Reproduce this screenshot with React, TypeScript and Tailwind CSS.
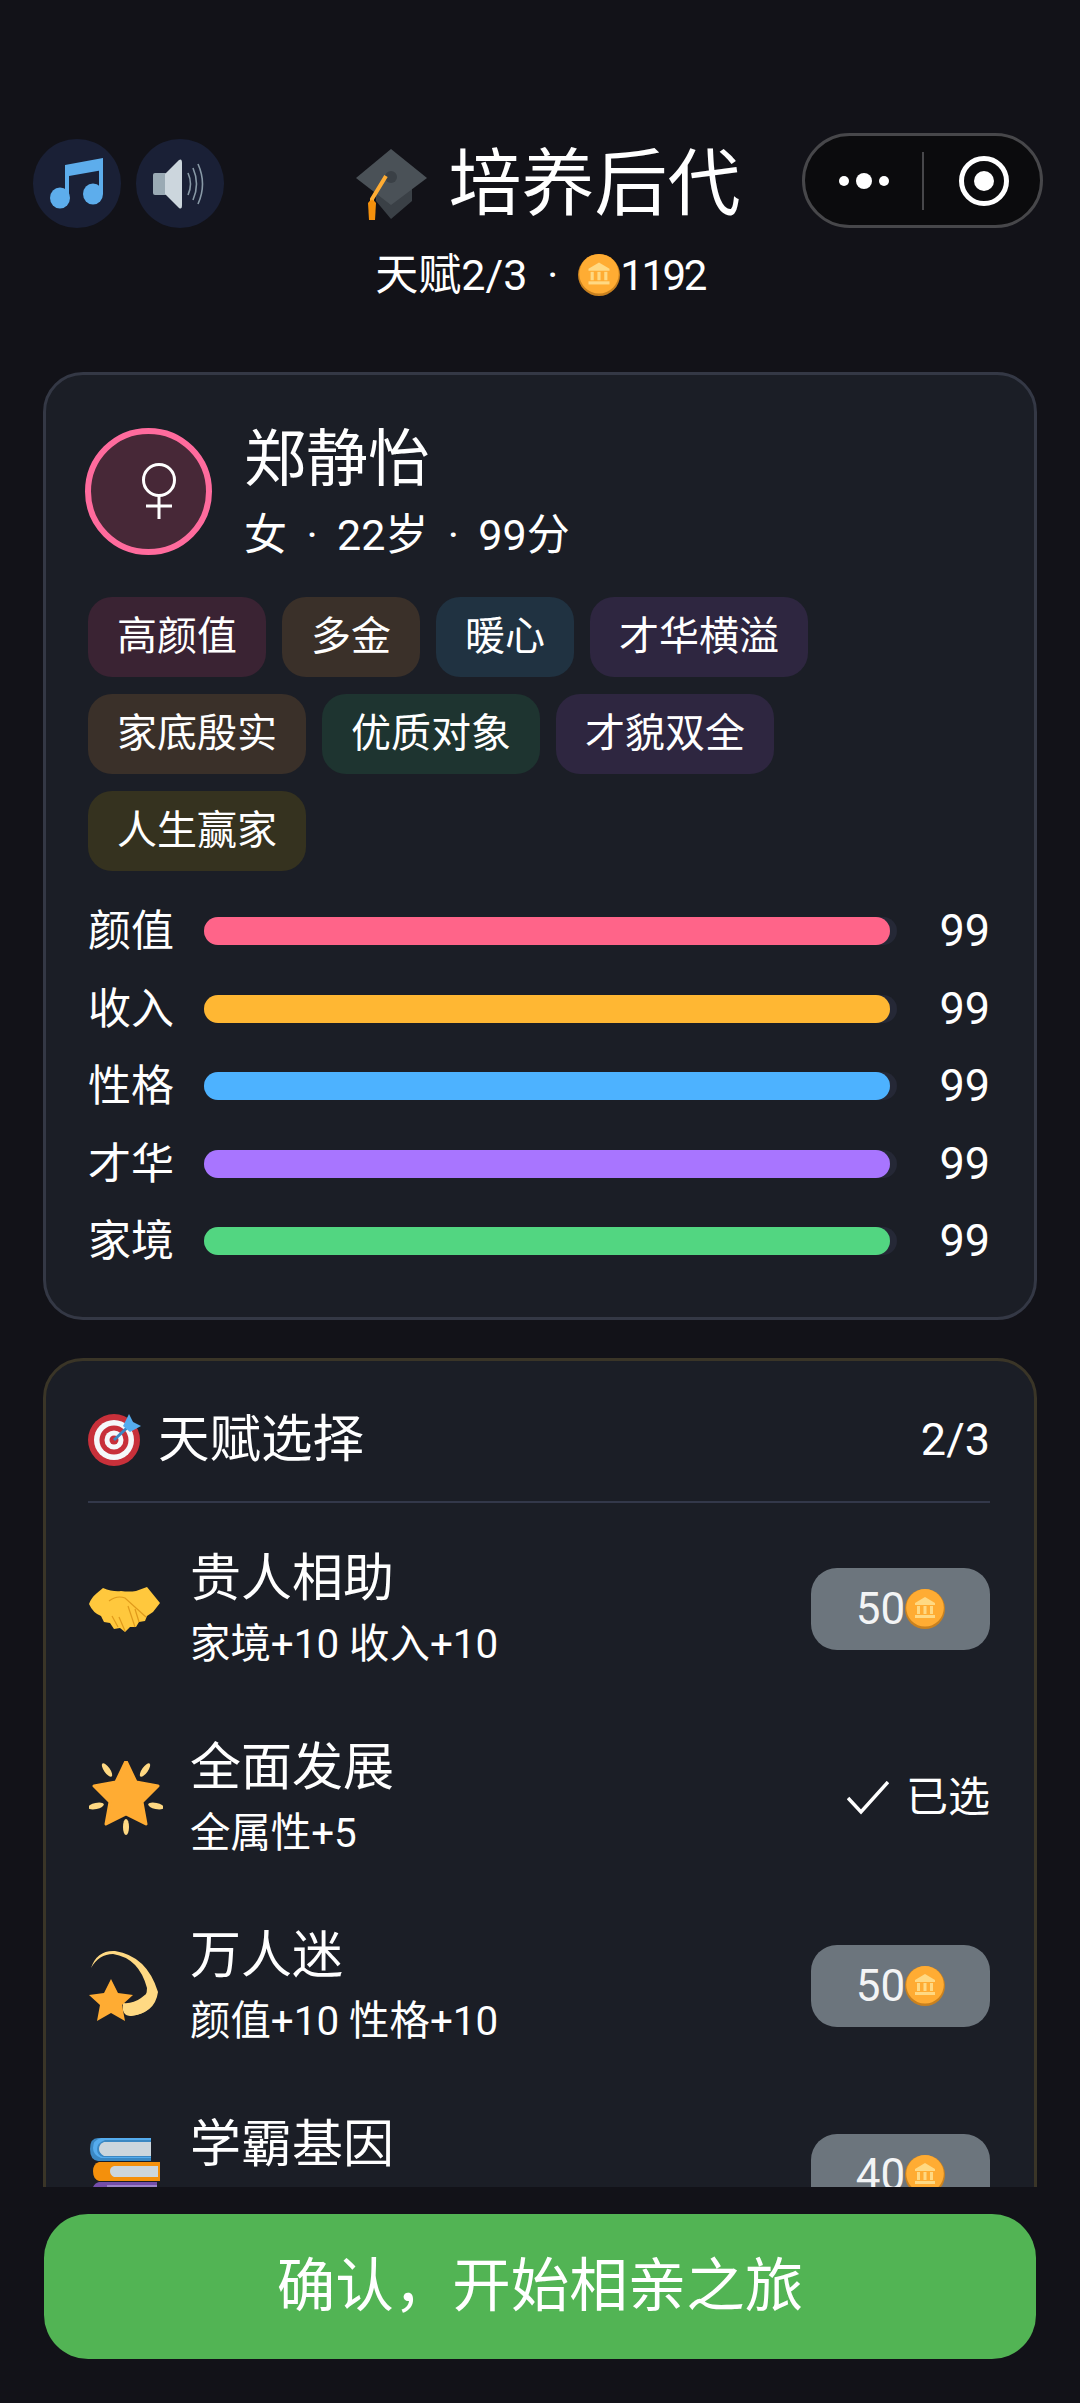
import React from 'react';

const Coin = ({ size = 40 }: { size?: number }) => (
  <svg width={size} height={size} viewBox="0 0 40 40" className="shrink-0">
    <circle cx="20" cy="20" r="20" fill="#C9811F" />
    <circle cx="20" cy="18.8" r="18.8" fill="#FFAC33" />
    <g fill="#FFD983">
      <path d="M20 8 L30 14 V16 H10 V14 Z" />
      <rect x="12" y="17" width="3" height="8" />
      <rect x="18.5" y="17" width="3" height="8" />
      <rect x="25" y="17" width="3" height="8" />
      <rect x="10" y="26" width="20" height="3" />
    </g>
  </svg>
);

const MusicIcon = () => (
  <svg width="54" height="51" viewBox="0 0 54 51">
    <g fill="#5DADEC">
      <path d="M15 7 L53 0 V12 L19 18 V40 H15 Z" />
      <path d="M49 2 H53 V36 H49 Z" />
      <ellipse cx="10" cy="40" rx="10" ry="10.5" />
      <ellipse cx="43" cy="36" rx="10" ry="10.5" />
    </g>
  </svg>
);

const SpeakerIcon = () => (
  <svg width="54" height="50" viewBox="0 0 54 50">
    <rect x="0" y="14" width="14" height="22" rx="2" fill="#9AAAB4" />
    <path d="M12 15 L26 1 Q29 -1 29 4 V46 Q29 51 26 49 L12 35 Z" fill="#CCD6DD" />
    <g fill="none" stroke="#8899A6" strokeWidth="1.6">
      <path d="M35 14 Q40 25 35 36" />
      <path d="M40 9 Q47 25 40 41" />
      <path d="M45 5 Q54 25 45 45" />
    </g>
  </svg>
);

const CapIcon = () => (
  <svg width="72" height="72" viewBox="0 0 72 72">
    <path d="M20 34 L36 26 L56 34 V52 L35 70 L20 52 Z" fill="#3A4046" />
    <path d="M35 0 L71 29 L35 56 L0 29 Z" fill="#4A5157" />
    <circle cx="35" cy="28" r="6" fill="#3A4046" />
    <path d="M30 27 L16 50 V60" fill="none" stroke="#FFAC33" strokeWidth="4" />
    <path d="M12 54 Q16 48 20 54 L19 71 H13 Z" fill="#F4900C" />
  </svg>
);

const DartIcon = () => (
  <svg width="54" height="52" viewBox="0 0 54 52">
    <circle cx="26" cy="26" r="26" fill="#C8303A" />
    <circle cx="26" cy="26" r="20" fill="#F5F8FA" />
    <circle cx="26" cy="26" r="14.5" fill="#C8303A" />
    <circle cx="26" cy="26" r="9.5" fill="#F5F8FA" />
    <circle cx="26" cy="26" r="4.5" fill="#C8303A" />
    <path d="M26 26 L42 11" stroke="#3B88C3" strokeWidth="3" />
    <path d="M35 12 L41 0 L45 8 L53 12 L42 18 Z" fill="#55ACEE" />
  </svg>
);

const HandshakeIcon = () => (
  <svg width="71" height="47" viewBox="0 0 71 47">
    <path
      d="M0 18 Q2 12 8 7 L14 2 Q24 6 32 5 Q40 6 47 5 L58 1 L71 17 L64 26 L58 30 L56 35 L50 36 L47 41 L41 41 L36 46 L31 42 L25 43 L21 37 L15 36 L12 30 Q4 27 0 18 Z"
      fill="#FFC83D"
    />
    <g fill="none" stroke="#E09A1B" strokeWidth="1.2">
      <path d="M20 15 Q28 9 36 12 L57 31" />
      <path d="M46 23 L50 36" />
      <path d="M39 20 L46 41" />
      <path d="M30 31 L36 45" />
      <path d="M23 30 L29 41" />
    </g>
  </svg>
);

const STAR = 'M37 0 L47 21 L69 25 L53 41 L57 63 L37 53 L17 63 L21 41 L5 25 L27 21 Z';

const GlowingStarIcon = () => (
  <svg width="74" height="74" viewBox="0 0 74 74">
    <path d={STAR} fill="#FFAC33" strokeLinejoin="round" stroke="#FFAC33" strokeWidth="3" />
    <g fill="#FFD983">
      <ellipse cx="18" cy="9" rx="3" ry="8" transform="rotate(-35 18 9)" />
      <ellipse cx="56" cy="9" rx="3" ry="8" transform="rotate(35 56 9)" />
      <ellipse cx="7" cy="45" rx="8" ry="3" transform="rotate(-12 7 45)" />
      <ellipse cx="67" cy="45" rx="8" ry="3" transform="rotate(12 67 45)" />
      <ellipse cx="37" cy="66" rx="3" ry="8" />
    </g>
  </svg>
);

const DizzyIcon = () => (
  <svg width="70" height="72" viewBox="0 0 70 72">
    <path d="M2 18 Q8 0 26 1 Q58 6 69 42 Q66 64 40 66 Q58 52 58 38 Q50 8 24 4 Q10 4 2 18 Z" fill="#FFD983" />
    <path d="M34 53 Q44 54 52 48 Q58 44 62 38 Q70 62 42 66 Q32 66 34 53 Z" fill="#FFD983" />
    <path
      d="M22 29 L29 43 L44 45 L33 55 L36 71 L22 63 L8 71 L11 55 L0 45 L15 43 Z"
      fill="#FFAC33"
      strokeLinejoin="round"
    />
  </svg>
);

const BooksIcon = () => (
  <svg width="71" height="75" viewBox="0 0 71 75">
    <path d="M9 1 H62 V24 H9 Q1 23 1 12 Q1 1 9 1 Z" fill="#3B88C3" />
    <path d="M12 1 H62 V3 H16 Q8 6 8 12 Q8 18 14 20 H62 V21 H12 Q4 18 4 11 Q4 3 12 1 Z" fill="#55ACEE" />
    <path d="M15 5 H62 V19 H15 Q10 16 10 12 Q10 7 15 5 Z" fill="#CCD6DD" />
    <path d="M10 25 H71 V44 H10 Q4 42 4 34 Q4 27 10 25 Z" fill="#F4900C" />
    <path d="M25 29 H69 V40 H25 Q21 38 21 34 Q21 30 25 29 Z" fill="#CCD6DD" />
    <path d="M10 45 H68 V68 H10 Q3 66 3 56 Q3 47 10 45 Z" fill="#744EAA" />
    <path d="M18 48 H68 V64 H18 Z" fill="#9B84C9" />
  </svg>
);

const tags = [
  { text: '高颜值', bg: 'bg-[#3a2333]' },
  { text: '多金', bg: 'bg-[#3a3029]' },
  { text: '暖心', bg: 'bg-[#203241]' },
  { text: '才华横溢', bg: 'bg-[#2e2640]' },
  { text: '家底殷实', bg: 'bg-[#3a3029]' },
  { text: '优质对象', bg: 'bg-[#1e3430]' },
  { text: '才貌双全', bg: 'bg-[#2e2640]' },
  { text: '人生赢家', bg: 'bg-[#35321f]' },
];

const stats = [
  { label: '颜值', color: 'bg-[#ff6489]' },
  { label: '收入', color: 'bg-[#ffb733]' },
  { label: '性格', color: 'bg-[#4db2ff]' },
  { label: '才华', color: 'bg-[#a875ff]' },
  { label: '家境', color: 'bg-[#52d681]' },
];

const talents = [
  { name: '贵人相助', desc: '家境+10 收入+10', cost: 50, icon: <HandshakeIcon /> },
  { name: '全面发展', desc: '全属性+5', selected: true, icon: <GlowingStarIcon /> },
  { name: '万人迷', desc: '颜值+10 性格+10', cost: 50, icon: <DizzyIcon /> },
  { name: '学霸基因', desc: '', cost: 40, icon: <BooksIcon /> },
];

export default function App() {
  return (
    <div className="flex h-[2403px] w-[1080px] flex-col overflow-hidden bg-[#121218] font-['Roboto','Noto_Sans_CJK_SC',sans-serif] text-white">
      <header className="shrink-0 pt-[133px]">
        <div className="grid grid-cols-[1fr_auto_1fr] items-start pl-[33px] pr-[37px]">
          <div className="mt-[6px] flex gap-[15px]">
            <div className="flex h-[89px] w-[88px] items-center justify-center rounded-full bg-[#1a2036]">
              <MusicIcon />
            </div>
            <div className="flex h-[89px] w-[88px] items-center justify-center rounded-full bg-[#1a2036]">
              <SpeakerIcon />
            </div>
          </div>
          <div className="mt-[4px] flex items-center gap-[21px] pl-[20px]">
            <CapIcon />
            <h1 className="text-[73px] leading-[95px] font-normal">培养后代</h1>
          </div>
          <div className="flex justify-end">
            <div className="flex h-[95px] w-[241px] items-center rounded-full border-[3px] border-[#47474a] bg-[#0b0b0d]">
              <div className="flex flex-1 items-center justify-center gap-[7px]">
                <span className="h-[10px] w-[10px] rounded-full bg-white" />
                <span className="h-[16px] w-[16px] rounded-full bg-white" />
                <span className="h-[10px] w-[10px] rounded-full bg-white" />
              </div>
              <div className="h-[58px] w-[2px] bg-[#47474a]" />
              <div className="flex w-[116px] items-center justify-center pl-[3px]">
                <div className="flex h-[50px] w-[50px] items-center justify-center rounded-full border-[5px] border-white">
                  <span className="h-[20px] w-[20px] rounded-full bg-white" />
                </div>
              </div>
            </div>
          </div>
        </div>
        <div className="mt-[15px] flex h-[56px] items-center justify-center text-[42px]">
          <span className="text-[43px]">天赋2/3</span>
          <span className="ml-[20px] mr-[20px]">·</span>
          <Coin size={42} />
          <span className="tracking-[-2.5px]">1192</span>
        </div>
      </header>

      <main className="mt-[69px] flex min-h-0 flex-1 flex-col gap-[38px] overflow-hidden px-[43px]">
        <section className="shrink-0 rounded-[40px] border-[3px] border-[#343845] bg-[#1b1e26] pl-[42px] pr-[44px] pt-[53px] pb-[46px]">
          <div className="flex items-start gap-[32px]">
            <div className="-ml-[3px] flex h-[127px] w-[127px] shrink-0 items-center justify-center rounded-full border-[6px] border-[#ff6b9d] bg-[#472837] pl-[20px]">
              <svg width="36" height="60" viewBox="0 0 36 60" fill="none" stroke="white" strokeWidth="3">
                <circle cx="18" cy="18" r="15.5" />
                <path d="M18 34 V57 M5 44 H31" />
              </svg>
            </div>
            <div>
              <div className="text-[62px] leading-[64px]">郑静怡</div>
              <div className="mt-[15px] flex h-[56px] items-center text-[43px]">
                <span>女</span>
                <span className="w-[50px] text-center">·</span>
                <span>22岁</span>
                <span className="w-[50px] text-center">·</span>
                <span>99分</span>
              </div>
            </div>
          </div>

          <div className="mt-[34px] flex flex-wrap gap-x-[16px] gap-y-[17px]">
            {tags.map((tag) => (
              <span key={tag.text} className={`flex h-[80px] items-center rounded-[24px] px-[29px] text-[40px] ${tag.bg}`}>
                {tag.text}
              </span>
            ))}
          </div>

          <div className="mt-[30px] flex flex-col gap-[17.5px]">
            {stats.map((stat) => (
              <div key={stat.label} className="flex h-[60px] items-center">
                <span className="w-[116px] shrink-0 text-[43px] leading-[60px]">{stat.label}</span>
                <div className="h-[28px] w-[693px] shrink-0 rounded-full bg-[#252836]">
                  <div className={`h-full w-[99%] rounded-full ${stat.color}`} />
                </div>
                <span className="flex-1 text-right text-[45px] leading-[60px]">99</span>
              </div>
            ))}
          </div>
        </section>

        <section className="shrink-0 rounded-[40px] border-[3px] border-[#3a3527] bg-[#1b1e26] pl-[42px] pr-[44px] pt-[45px]">
          <div className="flex items-center justify-between border-b-2 border-[#33384a] pb-[27px]">
            <div className="flex items-center gap-[16px]">
              <DartIcon />
              <span className="text-[51.5px] leading-[68px]">天赋选择</span>
            </div>
            <span className="text-[45px]">2/3</span>
          </div>
          <div className="mt-[12px]">
            {talents.map((talent) => (
              <div key={talent.name} className="flex h-[188.5px] items-center">
                <div className="flex w-[102px] shrink-0 items-center pl-[1px]">{talent.icon}</div>
                <div className="flex-1">
                  <div className="text-[51px] leading-[72px]">{talent.name}</div>
                  <div className="h-[60px] text-[40.4px] leading-[60px]">{talent.desc}</div>
                </div>
                {talent.selected ? (
                  <div className="flex items-center gap-[17px] text-[42px]">
                    <svg width="42" height="34" viewBox="0 0 42 34" fill="none" stroke="white" strokeWidth="3.5">
                      <path d="M1 17 L14 31 L41 1" />
                    </svg>
                    <span>已选</span>
                  </div>
                ) : (
                  <div className="flex h-[82px] w-[179px] items-center justify-center rounded-[26px] bg-[#6c757d] text-[44px]">
                    <span className="text-[#f3f4f5]">{talent.cost}</span>
                    <Coin size={40} />
                  </div>
                )}
              </div>
            ))}
          </div>
        </section>
      </main>

      <footer className="h-[216px] shrink-0 bg-[#121218] px-[44px] pt-[27px]">
        <button className="flex h-[145px] w-full items-center justify-center rounded-[44px] bg-[#52b454] text-[58.5px] text-white">
          确认，开始相亲之旅
        </button>
      </footer>
    </div>
  );
}
